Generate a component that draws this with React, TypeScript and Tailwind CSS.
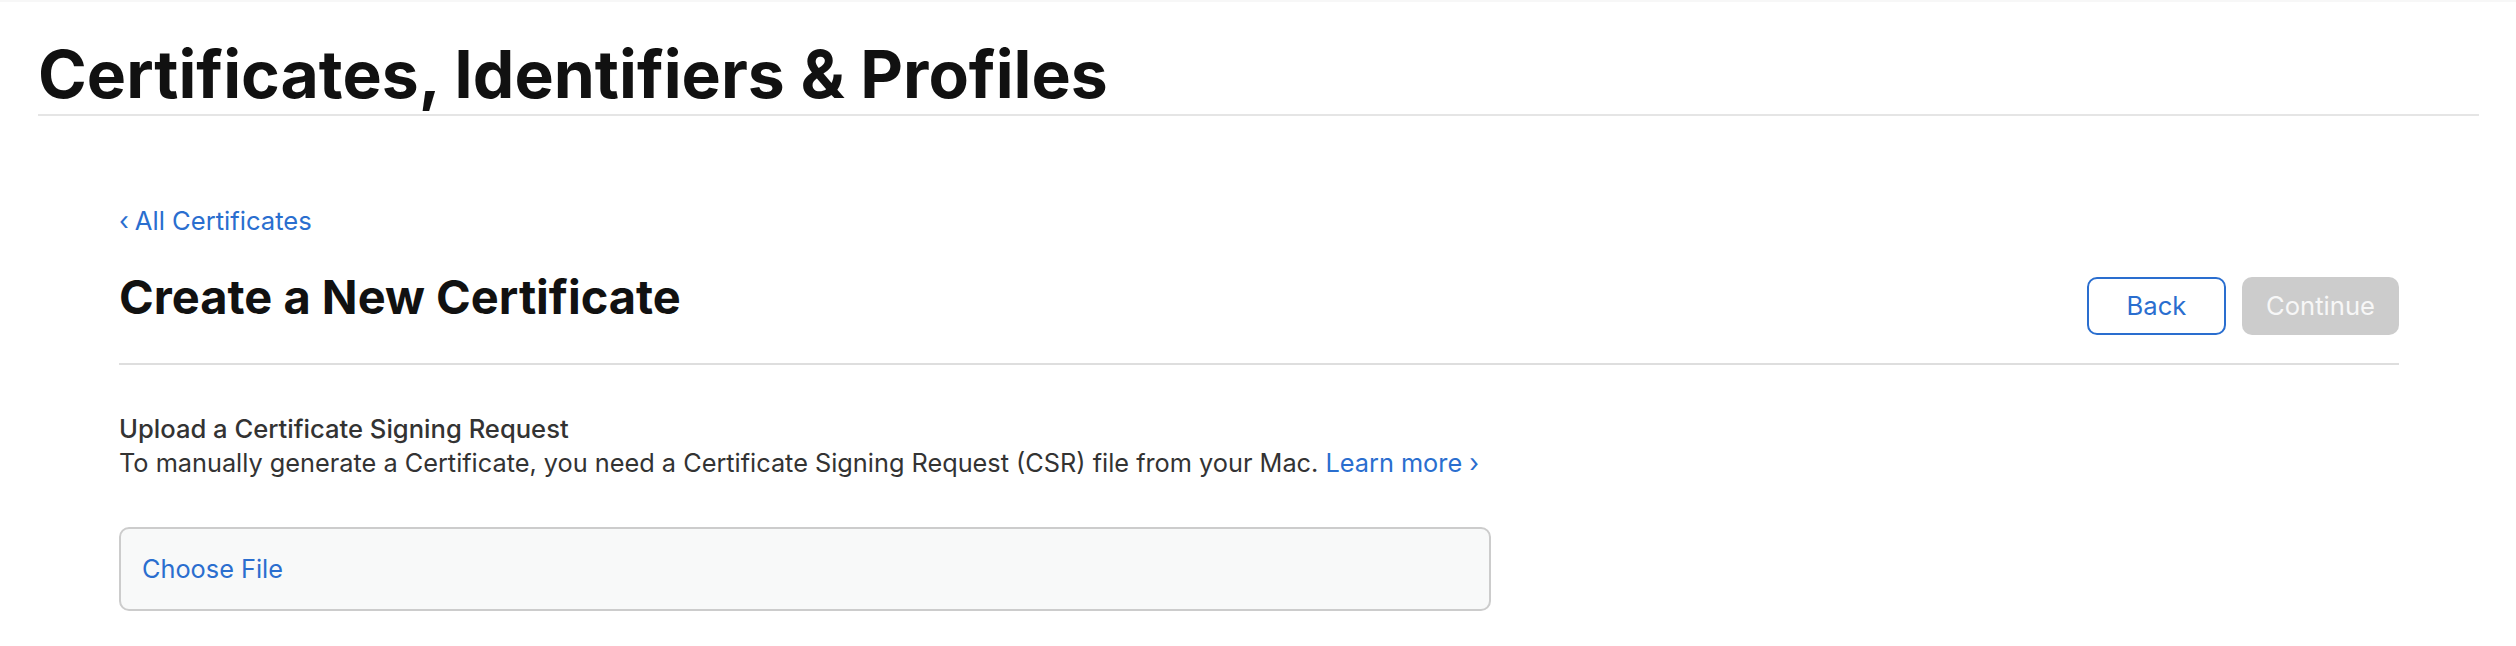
import React from "react";

export default function App() {
  return (
    <div className="w-full min-h-[646px] bg-white" style={{ fontFamily: "Inter, 'Noto Sans', 'Liberation Sans', sans-serif" }}>
      <div className="h-[2px] bg-[#f7f7f7]" />
      <div className="pl-[38px] pr-[37px]">
        <h1 className="mt-[39px] mb-[7px] text-[66px] leading-[66px] font-bold text-[#111]">
          Certificates, Identifiers &amp; Profiles
        </h1>
        <div className="h-[2px] bg-[#e5e5e5]" />
        <div className="pl-[81px] pr-[80px]">
          <a className="mt-[92px] block text-[25.6px] leading-[26px] text-[#2a6ecf]">
            <span className="mr-[6px]">‹</span>All Certificates
          </a>
          <div className="mt-[39px] flex items-start justify-between">
            <h2 className="text-[47px] leading-[47px] font-bold text-[#111]">Create a New Certificate</h2>
            <div className="mt-[4px] flex gap-[16px]">
              <button className="h-[58px] w-[139px] rounded-[10px] border-2 border-[#2a6ecf] bg-white text-[25.6px] text-[#2a6ecf] flex items-center justify-center">
                Back
              </button>
              <button className="h-[58px] w-[157px] rounded-[10px] bg-[#cccccc] text-[25.6px] text-[#f7f7f7] flex items-center justify-center">
                Continue
              </button>
            </div>
          </div>
          <div className="mt-[28px] h-[2px] bg-[#dedede]" />
          <p className="mt-[47px] text-[25.6px] leading-[34px] font-medium text-[#333]">Upload a Certificate Signing Request</p>
          <p className="text-[25.3px] leading-[34px] text-[#333]">
            To manually generate a Certificate, you need a Certificate Signing Request (CSR) file from your Mac.{" "}
            <a className="text-[#2a6ecf]">Learn more ›</a>
          </p>
          <div className="mt-[47px] h-[84px] w-[1372px] rounded-[10px] border-2 border-[#cccccc] bg-[#f8f9f9] flex items-center pl-[21px]">
            <span className="text-[25.3px] leading-[26px] text-[#2a6ecf]">Choose File</span>
          </div>
        </div>
      </div>
    </div>
  );
}
